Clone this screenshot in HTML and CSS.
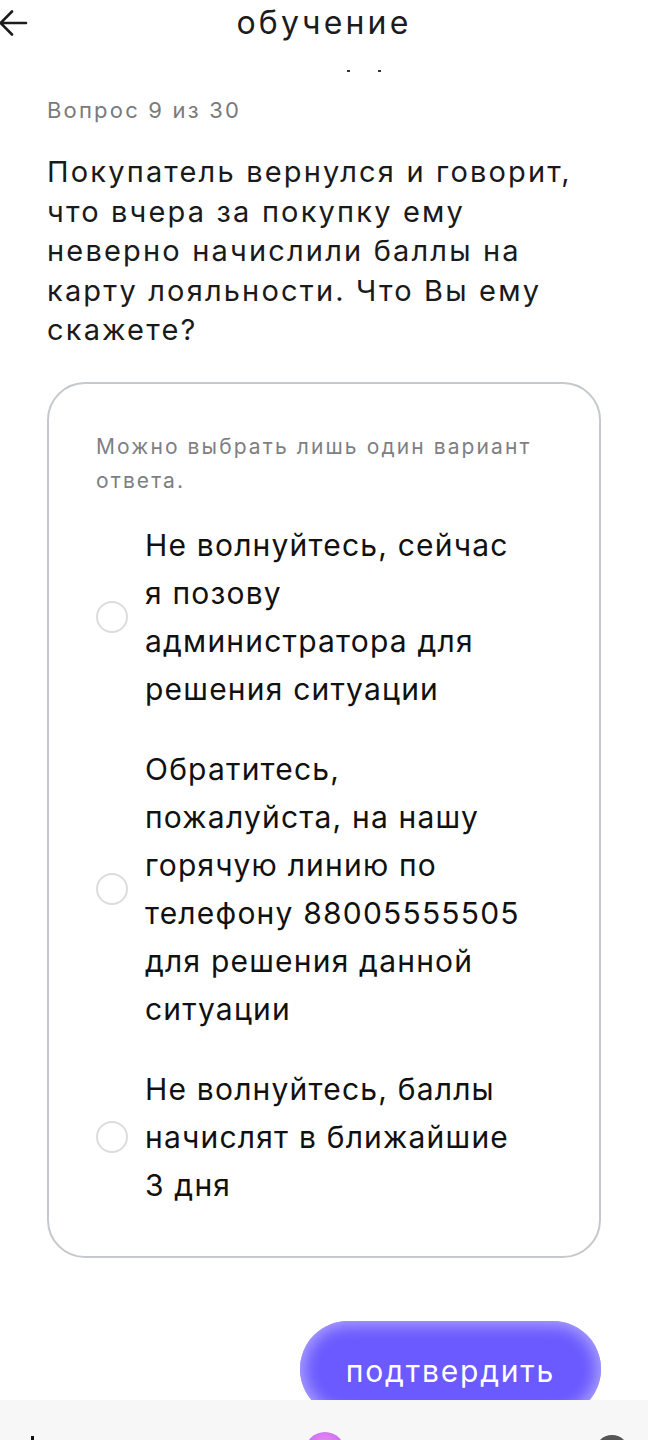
FILE: index.html
```html
<!DOCTYPE html>
<html lang="ru">
<head>
<meta charset="utf-8">
<link rel="stylesheet" href="styles.css">
</head>
<body>
<div class="page">
  <header class="topbar">
    <svg class="back" width="30" height="30" viewBox="0 0 30 30"><path d="M27 15H2M13 3.5L1.5 15L13 26.5" fill="none" stroke="#1c1c1c" stroke-width="2.6" stroke-linecap="round" stroke-linejoin="round"/></svg>
    <h1 class="title">обучение</h1>
  </header>
  <div class="ticks"><span class="tick"></span><span class="tick"></span></div>
  <main class="content">
    <div class="counter">Вопрос 9 из 30</div>
    <p class="question">Покупатель вернулся и говорит, что вчера за покупку ему неверно начислили баллы на карту лояльности. Что Вы ему скажете?</p>
    <section class="card">
      <p class="hint">Можно выбрать лишь один вариант ответа.</p>
      <div class="options">
        <label class="option"><span class="radio"></span><span class="opt-text">Не волнуйтесь, сейчас я позову администратора для решения ситуации</span></label>
        <label class="option"><span class="radio"></span><span class="opt-text">Обратитесь, пожалуйста, на нашу горячую линию по телефону 88005555505 для решения данной ситуации</span></label>
        <label class="option"><span class="radio"></span><span class="opt-text">Не волнуйтесь, баллы начислят в ближайшие 3&nbsp;дня</span></label>
      </div>
    </section>
    <div class="actions"><button class="confirm">подтвердить</button></div>
  </main>
  <nav class="bottomnav">
    <span class="nav-left"></span>
    <span class="nav-mid"></span>
    <span class="nav-right"></span>
  </nav>
</div>
</body>
</html>
```
FILE: styles.css
```css
* { box-sizing: border-box; }
html, body { margin: 0; padding: 0; background: #fff; }
body { width: 648px; height: 1440px; overflow: hidden; font-family: "Inter", "Liberation Sans", sans-serif; color: #1c1c1c; letter-spacing: 0.075em; }
.page { position: relative; height: 1440px; }
.topbar { position: relative; height: 46px; display: flex; align-items: center; justify-content: center; }
.back { position: absolute; left: -1px; top: 8px; }
.title { margin: 0; font-weight: 400; font-size: 32px; line-height: 46px; letter-spacing: 0.1em; }
.ticks { display: flex; gap: 28px; padding-left: 347px; height: 30px; padding-top: 24px; }
.tick { width: 3px; height: 2px; background: #333; }
.content { padding: 20px 47px 0 47px; }
.counter { font-size: 22px; color: #7a7a7a; line-height: 28px; letter-spacing: 0.1em; }
.question { margin: 28px 0 0; font-size: 29px; line-height: 39.5px; color: #1a1a1a; letter-spacing: 0.075em; padding-right: 24px; }
.card { margin-top: 32px; border: 2px solid #c5c8cd; border-radius: 38px; padding: 46px 40px 47px 47px; }
.hint { margin: 0; font-size: 21px; line-height: 34px; color: #7d7f84; letter-spacing: 0.1em; }
.options { margin-top: 23px; display: flex; flex-direction: column; gap: 32px; }
.option { display: flex; align-items: center; gap: 17px; }
.radio { flex: none; width: 32px; height: 32px; border: 2px solid #dcdcdc; border-radius: 50%; }
.opt-text { font-size: 30px; line-height: 48px; color: #111; padding-right: 30px; }
.actions { display: flex; justify-content: flex-end; margin-top: 63px; }
.confirm { width: 301px; height: 96px; border: none; border-radius: 48px; background: #6a5aff; box-shadow: inset 0 0 16px 4px #b0a5ff; color: #fff; font-family: inherit; font-size: 30px; letter-spacing: 0.06em; padding: 4px 0 0; }
.bottomnav { position: absolute; left: 0; right: 0; bottom: 0; height: 40px; background: #f7f7f8; overflow: hidden; }
.nav-left { position: absolute; left: 31px; top: 36px; width: 3px; height: 6px; background: #111; }
.nav-mid { position: absolute; left: 305px; top: 32px; width: 40px; height: 40px; border-radius: 50%; background: radial-gradient(circle at 50% 30%, #e48cf5, #b94ee6); }
.nav-right { position: absolute; left: 595px; top: 35px; width: 34px; height: 34px; border-radius: 50%; background: #555; }
```
